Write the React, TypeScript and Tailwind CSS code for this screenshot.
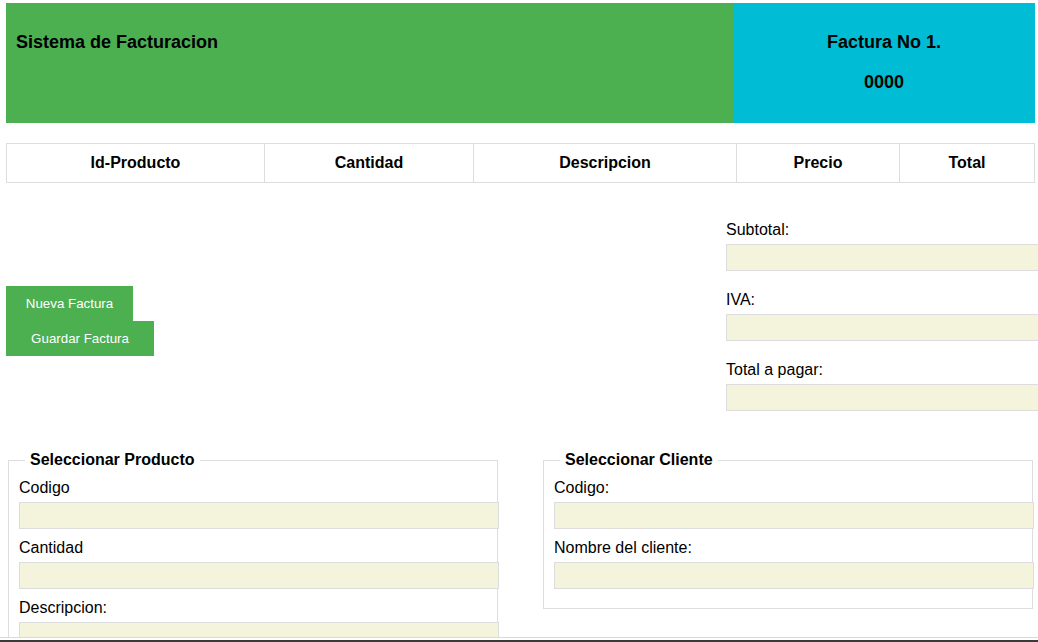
import React from "react";

function Field({ label, last }: { label: string; last?: boolean }) {
  return (
    <div className={last ? "" : "mb-[9px]"}>
      <div className="h-[19px] leading-[20px] text-[16px] text-black">{label}</div>
      <input
        readOnly
        className="mt-[5px] block h-[27px] w-[480px] border border-[#dddddd] bg-[#f4f4dc] outline-none"
      />
    </div>
  );
}

function RightField({ label }: { label: string }) {
  return (
    <div className="mb-[19px] last:mb-0">
      <div className="h-[19px] leading-[20px] text-[16px] text-black">{label}</div>
      <input
        readOnly
        className="mt-[5px] block h-[27px] w-[480px] border border-[#dddddd] bg-[#f4f4dc] outline-none"
      />
    </div>
  );
}

export default function App() {
  return (
    <div className="relative h-[642px] w-[1038px] overflow-hidden bg-white pt-[3px] font-['Liberation_Sans',Arial,sans-serif] text-black">
      {/* Header */}
      <div className="ml-[6px] mr-[3px] flex h-[120px]">
        <div className="w-[727px] shrink-0 bg-[#4caf50] pl-[10px] pt-[29px]">
          <h1 className="text-[18px] font-bold leading-[21px]">Sistema de Facturacion</h1>
        </div>
        <div className="flex-1 bg-[#00bcd4] pt-[19px] text-center text-[18px] font-bold leading-[40px]">
          <div>Factura No 1.</div>
          <div>0000</div>
        </div>
      </div>

      {/* Table header */}
      <div className="ml-[6px] mr-[3px] mt-[20px] flex h-[40px] border border-[#dddddd] text-[16px] font-bold">
        <div className="flex w-[258px] shrink-0 items-center justify-center border-r border-[#dddddd]">Id-Producto</div>
        <div className="flex w-[209px] shrink-0 items-center justify-center border-r border-[#dddddd]">Cantidad</div>
        <div className="flex w-[263px] shrink-0 items-center justify-center border-r border-[#dddddd]">Descripcion</div>
        <div className="flex w-[163px] shrink-0 items-center justify-center border-r border-[#dddddd]">Precio</div>
        <div className="flex flex-1 items-center justify-center">Total</div>
      </div>

      {/* Middle */}
      <div className="flex">
        <div className="ml-[6px] w-[720px] shrink-0 pt-[103px]">
          <button className="block h-[35px] w-[127px] bg-[#4caf50] text-center text-[13.33px] text-white">
            Nueva Factura
          </button>
          <button className="block h-[35px] w-[148px] bg-[#4caf50] text-center text-[13.33px] text-white">
            Guardar Factura
          </button>
        </div>
        <div className="shrink-0 pt-[37px]">
          <RightField label="Subtotal:" />
          <RightField label="IVA:" />
          <RightField label="Total a pagar:" />
        </div>
      </div>

      {/* Fieldsets */}
      <div className="mt-[40px] flex items-start gap-[45px] pl-[8px]">
        <fieldset className="w-[490px] min-w-0 shrink-0 border border-[#dddddd] px-[10px] pb-[19px] pt-[9px]">
          <legend className="ml-[6px] px-[5px] text-[16px] font-bold leading-[18px]">Seleccionar Producto</legend>
          <Field label="Codigo" />
          <Field label="Cantidad" />
          <Field label="Descripcion:" last />
        </fieldset>
        <fieldset className="w-[490px] min-w-0 shrink-0 border border-[#dddddd] px-[10px] pb-[19px] pt-[9px]">
          <legend className="ml-[6px] px-[5px] text-[16px] font-bold leading-[18px]">Seleccionar Cliente</legend>
          <Field label="Codigo:" />
          <Field label="Nombre del cliente:" last />
        </fieldset>
      </div>

      {/* bottom bar */}
      <div className="absolute bottom-0 left-0 right-0 flex h-[5px] flex-col">
        <div className="h-[1px] bg-[#d9d9d9]" />
        <div className="h-[2px] bg-white" />
        <div className="h-[2px] bg-[#3a3a3a]" />
      </div>
    </div>
  );
}
